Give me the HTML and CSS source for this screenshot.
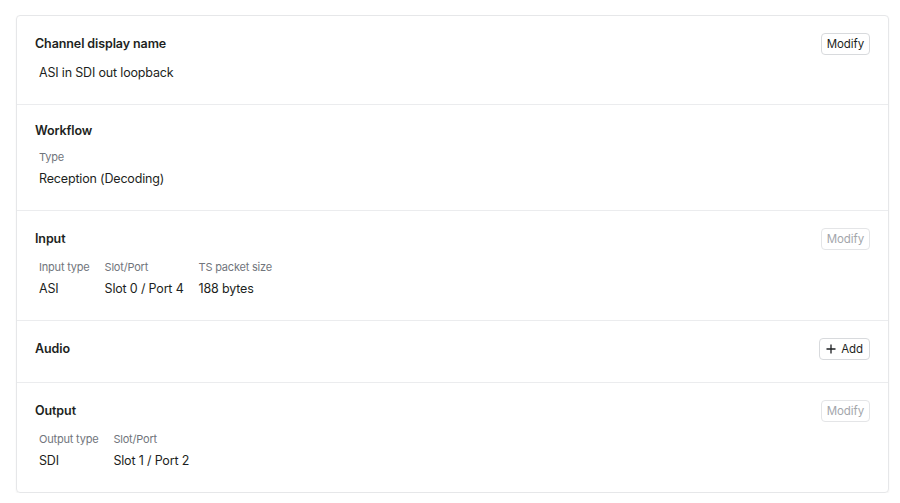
FILE: index.html
```html
<!DOCTYPE html>
<html lang="en">
<head>
  <meta charset="UTF-8" />
  <title>Channel details</title>
  <link rel="stylesheet" href="styles.css">
</head>
<body>
  <div class="card">

    <section class="section">
      <div class="section-head">
        <h3>Channel display name</h3>
        <button class="btn">Modify</button>
      </div>
      <div class="value single">ASI in SDI out loopback</div>
    </section>

    <section class="section">
      <div class="section-head">
        <h3>Workflow</h3>
      </div>
      <div class="fields">
        <div class="field">
          <div class="label">Type</div>
          <div class="value">Reception (Decoding)</div>
        </div>
      </div>
    </section>

    <section class="section">
      <div class="section-head">
        <h3>Input</h3>
        <button class="btn" disabled>Modify</button>
      </div>
      <div class="fields">
        <div class="field">
          <div class="label">Input type</div>
          <div class="value">ASI</div>
        </div>
        <div class="field">
          <div class="label">Slot/Port</div>
          <div class="value">Slot 0 / Port 4</div>
        </div>
        <div class="field">
          <div class="label">TS packet size</div>
          <div class="value">188 bytes</div>
        </div>
      </div>
    </section>

    <section class="section">
      <div class="section-head">
        <h3>Audio</h3>
        <button class="btn btn-add">
          <svg width="10" height="10" viewBox="0 0 10 10"><path d="M5 0.5v9M0.5 5h9" stroke="currentColor" stroke-width="1.3" fill="none"/></svg>
          Add
        </button>
      </div>
    </section>

    <section class="section">
      <div class="section-head">
        <h3>Output</h3>
        <button class="btn" disabled>Modify</button>
      </div>
      <div class="fields">
        <div class="field">
          <div class="label">Output type</div>
          <div class="value">SDI</div>
        </div>
        <div class="field">
          <div class="label">Slot/Port</div>
          <div class="value">Slot 1 / Port 2</div>
        </div>
      </div>
    </section>

  </div>
</body>
</html>
```

FILE: styles.css
```css
body {
  margin: 0;
  padding: 15px 11px 0 16px;
  font-family: Inter, "Noto Sans", sans-serif;
  color: #1d1f22;
  background: #fff;
}
.card {
  border: 1px solid #e6e7e9;
  border-radius: 4px;
  box-shadow: 0 1px 2px rgba(0, 0, 0, 0.06);
}
.section {
  padding: 16px 18px 21px 18px;
  border-top: 1px solid #ebecee;
}
.section:first-child {
  border-top: none;
}
.section-head {
  display: flex;
  align-items: center;
  justify-content: space-between;
  min-height: 20px;
}
.section-head h3 {
  margin: 0;
  font-size: 12.5px;
  font-weight: 600;
  line-height: 20px;
  letter-spacing: -0.1px;
}
.btn {
  font-family: inherit;
  font-size: 11.5px;
  font-weight: 400;
  letter-spacing: -0.1px;
  color: #1d1f22;
  background: #fff;
  border: 1px solid #d8dadd;
  border-radius: 4px;
  height: 22px;
  margin: 1px 0;
  padding: 0 5px;
  display: flex;
  align-items: center;
  gap: 5px;
}
.btn:disabled {
  color: #a3a6ab;
  border-color: #e4e5e7;
}
.btn-add {
  padding: 0 6px;
}
.fields {
  display: flex;
  gap: 15px;
  padding-left: 4px;
  margin-top: 8px;
}
.label {
  font-size: 11px;
  line-height: 16px;
  letter-spacing: -0.2px;
  color: #71757c;
}
.value {
  font-size: 12.5px;
  line-height: 20px;
  letter-spacing: -0.17px;
  margin-top: 4px;
}
.value.single {
  padding-left: 4px;
  margin-top: 7px;
}
```
